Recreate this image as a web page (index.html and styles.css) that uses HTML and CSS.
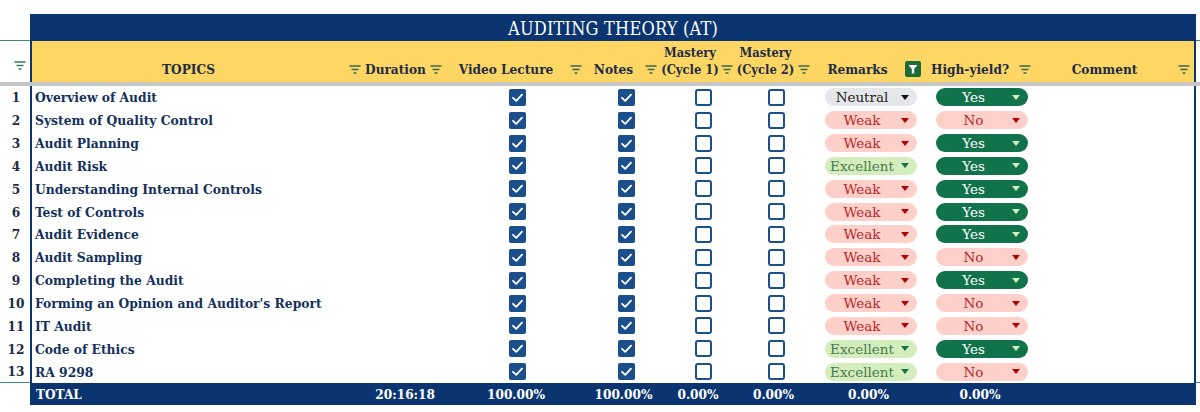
FILE: index.html
```html
<!DOCTYPE html>
<html>
<head>
<meta charset="utf-8">
<link rel="stylesheet" href="styles.css">
</head>
<body>
<div class="sheet">
  <div class="title-row">
    <div class="gut"></div>
    <div class="title">AUDITING THEORY (AT)</div>
    <div class="rside"></div>
  </div>
  <div class="row head">
    <div class="gutter-h"><span class="fi"><svg width="12" height="9" viewBox="0 0 12 9"><path d="M0.5 1h11M2.5 4.5h7M4.5 8h3" stroke="#3a7a68" stroke-width="1.3"/></svg></span></div>
    <div class="hc first"><span class="ht">TOPICS</span><span class="fi"><svg width="12" height="9" viewBox="0 0 12 9"><path d="M0.5 1h11M2.5 4.5h7M4.5 8h3" stroke="#3a6a50" stroke-width="1.3"/></svg></span></div>
    <div class="hc"><span class="ht">Duration</span><span class="fi"><svg width="12" height="9" viewBox="0 0 12 9"><path d="M0.5 1h11M2.5 4.5h7M4.5 8h3" stroke="#3a6a50" stroke-width="1.3"/></svg></span></div>
    <div class="hc"><span class="ht">Video Lecture</span><span class="fi"><svg width="12" height="9" viewBox="0 0 12 9"><path d="M0.5 1h11M2.5 4.5h7M4.5 8h3" stroke="#3a6a50" stroke-width="1.3"/></svg></span></div>
    <div class="hc"><span class="ht">Notes</span><span class="fi"><svg width="12" height="9" viewBox="0 0 12 9"><path d="M0.5 1h11M2.5 4.5h7M4.5 8h3" stroke="#3a6a50" stroke-width="1.3"/></svg></span></div>
    <div class="hc narrow"><span class="ht">Mastery<br>(Cycle 1)</span><span class="fi"><svg width="12" height="9" viewBox="0 0 12 9"><path d="M0.5 1h11M2.5 4.5h7M4.5 8h3" stroke="#3a6a50" stroke-width="1.3"/></svg></span></div>
    <div class="hc narrow"><span class="ht">Mastery<br>(Cycle 2)</span><span class="fi"><svg width="12" height="9" viewBox="0 0 12 9"><path d="M0.5 1h11M2.5 4.5h7M4.5 8h3" stroke="#3a6a50" stroke-width="1.3"/></svg></span></div>
    <div class="hc"><span class="ht">Remarks</span><span class="fi active"><svg width="16" height="16" viewBox="0 0 16 16"><rect width="16" height="16" rx="2" fill="#1d6b36"/><path d="M3.5 4h9l-3.3 4v4.5h-2.4V8z" fill="#fff"/></svg></span></div>
    <div class="hc"><span class="ht">High-yield?</span><span class="fi"><svg width="12" height="9" viewBox="0 0 12 9"><path d="M0.5 1h11M2.5 4.5h7M4.5 8h3" stroke="#3a6a50" stroke-width="1.3"/></svg></span></div>
    <div class="hc last"><span class="ht">Comment</span><span class="fi"><svg width="12" height="9" viewBox="0 0 12 9"><path d="M0.5 1h11M2.5 4.5h7M4.5 8h3" stroke="#3a6a50" stroke-width="1.3"/></svg></span></div>
    <div class="rside-h"></div>
  </div>
  <div class="freeze"></div>
  <div class="rows" id="rows"></div>
  <div class="row total">
    <div class="gutter-t"></div>
    <div class="tc first left">TOTAL</div>
    <div class="tc right">20:16:18</div>
    <div class="tc">100.00%</div>
    <div class="tc">100.00%</div>
    <div class="tc">0.00%</div>
    <div class="tc">0.00%</div>
    <div class="tc">0.00%</div>
    <div class="tc">0.00%</div>
    <div class="tc last"></div>
    <div class="rside-t"></div>
  </div>
</div>
<script src="app.js"></script>
</body>
</html>
```

FILE: styles.css
```css
* { box-sizing: border-box; }
html, body { margin: 0; padding: 0; background: #fff; }
body {
  width: 1200px;
  height: 412px;
  overflow: hidden;
  font-family: "DejaVu Serif", "Liberation Serif", serif;
  font-stretch: condensed;
}
.sheet { padding-top: 14px; }

.title-row {
  display: grid;
  grid-template-columns: 30px 1166px 4px;
  height: 27px;
}
.gut, .rside { border-bottom: 1px solid #3f8a5a; }
.title {
  background: #0b3570;
  color: #fff;
  font-size: 18px;
  display: flex;
  align-items: center;
  justify-content: center;
  padding-top: 1px;
  letter-spacing: 0.2px;
}

.row {
  display: grid;
  grid-template-columns: 30px 335px 81px 140px 75px 74px 77px 113px 110px 161px 4px;
}

.head { height: 41px; grid-template-rows: 41px; }
.gutter-h {
  display: flex;
  align-items: flex-end;
  justify-content: center;
  padding-bottom: 8px;
  padding-left: 10px;
}
.hc {
  background: #fdd663;
  display: flex;
  align-items: flex-end;
  padding-bottom: 4px;
  color: #1d2b45;
  font-weight: bold;
  font-size: 13.5px;
  line-height: 17px;
  white-space: nowrap;
  overflow: visible;
}
.hc.narrow { font-size: 12.8px; }
.hc.first { border-left: 2px solid #0b3570; }
.hc.last { border-right: 2px solid #0b3570; }
.ht { flex: 1; text-align: center; }
.fi {
  width: 20px;
  flex: none;
  display: flex;
  justify-content: center;
  padding-bottom: 4px;
}
.hc.narrow .fi { width: 16px; }
.fi.active { padding-bottom: 1px; margin-right: 2px; }

.freeze { height: 4px; background: #c6c6c6; }

.rows { display: flex; flex-direction: column; }
.drow { height: 22.85px; }
.num {
  display: flex;
  align-items: center;
  justify-content: center;
  font-weight: bold;
  font-size: 13.5px;
  color: #1d2b45;
  padding-left: 2px;
}
.cell {
  display: flex;
  align-items: center;
  justify-content: center;
}
.cell.topic {
  border-left: 2px solid #0b3570;
  justify-content: flex-start;
  padding-left: 3px;
  font-weight: bold;
  font-size: 13.7px;
  color: #13315c;
  white-space: nowrap;
}
.cell.last { border-right: 2px solid #0b3570; }
.drow:last-child .num, .drow:last-child .rs { border-bottom: 1px solid #3f8a7a; }
.cb { display: block; }
.cb-video { margin-left: 2px; }
.cb-notes { margin-left: 6px; }
.cb-m1 { margin-left: 10px; }
.cb-m2 { margin-left: 6px; }

.chip {
  width: 92px;
  height: 18px;
  border-radius: 9px;
  display: flex;
  align-items: center;
  font-size: 13.5px;
  font-stretch: normal;
  line-height: 18px;
  white-space: nowrap;
}
.chip .t { flex: 1; text-align: center; padding-left: 1px; }
.chip .tri {
  flex: none;
  width: 0; height: 0;
  border-left: 4.5px solid transparent;
  border-right: 4.5px solid transparent;
  border-top: 5px solid currentColor;
  margin-left: 2px;
  margin-right: 8px;
}
.rem { margin-left: 4px; }
.hy { margin-left: 4px; }
.neutral { background: #e6e7ea; color: #222; }
.neutral .tri { color: #111; }
.weak, .no { background: #ffcfc9; color: #b4282a; }
.weak .tri, .no .tri { color: #b10202; }
.excellent { background: #d4edbc; color: #4a7b4f; }
.excellent .tri { color: #11734b; }
.yes { background: #11734b; color: #fff; }
.yes .tri { color: #d4edbc; }

.total { height: 22px; }
.tc {
  background: #0b3570;
  color: #fff;
  font-weight: bold;
  font-size: 13.5px;
  display: flex;
  align-items: center;
  justify-content: center;
}
.tc.first { border-left: 2px solid #0b3570; }
.tc.left { justify-content: flex-start; padding-left: 4px; }
.tc.right { justify-content: flex-end; padding-right: 11px; }
```

FILE: app.js
```js
const topics = [
  ["Overview of Audit", "Neutral", "Yes"],
  ["System of Quality Control", "Weak", "No"],
  ["Audit Planning", "Weak", "Yes"],
  ["Audit Risk", "Excellent", "Yes"],
  ["Understanding Internal Controls", "Weak", "Yes"],
  ["Test of Controls", "Weak", "Yes"],
  ["Audit Evidence", "Weak", "Yes"],
  ["Audit Sampling", "Weak", "No"],
  ["Completing the Audit", "Weak", "Yes"],
  ["Forming an Opinion and Auditor's Report", "Weak", "No"],
  ["IT Audit", "Weak", "No"],
  ["Code of Ethics", "Excellent", "Yes"],
  ["RA 9298", "Excellent", "No"]
];
const checked = '<svg class="cb" width="17" height="17" viewBox="0 0 17 17"><rect width="17" height="17" rx="2" fill="#1b4f8c"/><path d="M4 8.8l3.2 3.1 5.8-6.3" fill="none" stroke="#fff" stroke-width="1.8" stroke-linecap="round" stroke-linejoin="round"/></svg>';
const unchecked = '<svg class="cb" width="17" height="17" viewBox="0 0 17 17"><rect x="1" y="1" width="15" height="15" rx="2" fill="none" stroke="#1b4f8c" stroke-width="2"/></svg>';
const chip = (v, cls) => `<div class="chip ${v.toLowerCase()} ${cls}"><span class="t">${v}</span><span class="tri"></span></div>`;
const rows = document.getElementById("rows");
rows.innerHTML = topics.map((t, i) => `
  <div class="row drow">
    <div class="num">${i + 1}</div>
    <div class="cell topic">${t[0]}</div>
    <div class="cell"></div>
    <div class="cell"><span class="cb-video">${checked}</span></div>
    <div class="cell"><span class="cb-notes">${checked}</span></div>
    <div class="cell"><span class="cb-m1">${unchecked}</span></div>
    <div class="cell"><span class="cb-m2">${unchecked}</span></div>
    <div class="cell">${chip(t[1], "rem")}</div>
    <div class="cell">${chip(t[2], "hy")}</div>
    <div class="cell last"></div>
    <div class="rs"></div>
  </div>`).join("");
```
